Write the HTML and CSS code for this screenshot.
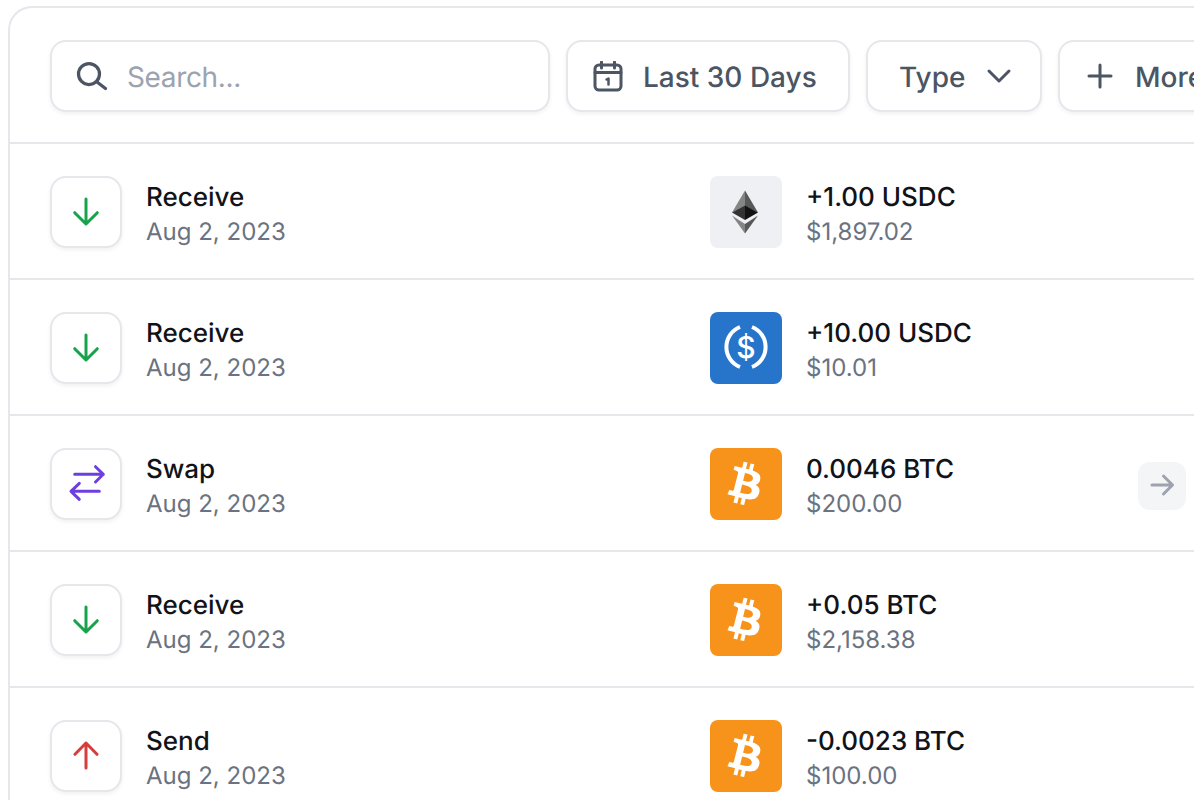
FILE: index.html
```html
<!DOCTYPE html>
<html lang="en">
<head>
  <meta charset="UTF-8">
  <title>Transactions</title>
  <link rel="stylesheet" href="styles.css">
</head>
<body>
  <div class="card">
    <div class="toolbar">
      <div class="search">
        <svg class="icon icon-search" viewBox="0 0 32 32"><circle cx="13" cy="13" r="10.500"/><path d="M21 21l8.500 6.500"/></svg>
        <span class="placeholder">Search...</span>
      </div>
      <button class="filter filter-date">
        <svg class="icon" viewBox="0 0 32 32"><rect x="3" y="4" width="26" height="25" rx="4"/><path d="M3 11.500h26M9.500 1v6M22.500 1v6"/><path class="thin" d="M14.500 18.500l2-1v6"/></svg>
        Last 30 Days
      </button>
      <button class="filter filter-type">
        Type
        <svg class="icon" viewBox="0 0 32 32"><path d="M6 10l10 10 10-10"/></svg>
      </button>
      <button class="filter filter-more">
        <svg class="icon" viewBox="0 0 32 32"><path d="M16 4v22M5 15h22"/></svg>
        More
      </button>
    </div>

    <div class="row">
      <div class="cell">
        <div class="kind kind-in"><svg viewBox="0 0 36 36"><path d="M18 5v25M6.700 18.700L18 30l11.300-11.300"/></svg></div>
        <div class="info"><div class="title">Receive</div><div class="sub">Aug 2, 2023</div></div>
      </div>
      <div class="cell">
        <div class="coin coin-eth">
          <svg viewBox="0 0 72 72">
            <path fill="#858585" d="M35 14.500V30L22 36.500z"/>
            <path fill="#585858" d="M35 14.500V30l13 6.500z"/>
            <path fill="#333" d="M22 36.500L35 29.500V44z"/>
            <path fill="#121212" d="M48 36.500L35 29.500V44z"/>
            <path fill="#858585" d="M22 39.500L35 48v9.500z"/>
            <path fill="#585858" d="M48 39.500L35 48v9.500z"/>
          </svg>
        </div>
        <div class="info"><div class="title">+1.00 USDC</div><div class="sub">$1,897.02</div></div>
      </div>
    </div>

    <div class="row">
      <div class="cell">
        <div class="kind kind-in"><svg viewBox="0 0 36 36"><path d="M18 5v25M6.700 18.700L18 30l11.300-11.300"/></svg></div>
        <div class="info"><div class="title">Receive</div><div class="sub">Aug 2, 2023</div></div>
      </div>
      <div class="cell">
        <div class="coin coin-usdc">
          <svg viewBox="0 0 72 72">
            <path class="ring" d="M30 15a21.500 21.500 0 0 0 0 40M42 15a21.500 21.500 0 0 1 0 40"/>
            <text class="dollar" x="36" y="45.500">$</text>
          </svg>
        </div>
        <div class="info"><div class="title">+10.00 USDC</div><div class="sub">$10.01</div></div>
      </div>
    </div>

    <div class="row">
      <div class="cell">
        <div class="kind kind-swap"><svg viewBox="0 0 36 36"><path d="M6.700 8.300h28.600M27.500.700l7.800 7.600-7.800 7.700M31.300 25.300H3M11.300 17.300L3 25.300l8.300 8"/></svg></div>
        <div class="info"><div class="title">Swap</div><div class="sub">Aug 2, 2023</div></div>
      </div>
      <div class="cell">
        <div class="coin coin-btc">
          <svg viewBox="-0.300 -0.600 25.200 25.200"><path d="M17.300 10.300c.24-1.590-.974-2.450-2.640-3.030l.54-2.153-1.315-.33-.525 2.107c-.345-.087-.705-.167-1.064-.25l.526-2.127-1.320-.33-.54 2.165c-.285-.067-.565-.132-.84-.2l-1.815-.45-.35 1.407s.975.225.955.236c.535.136.63.486.615.766l-1.477 5.920c-.075.166-.24.406-.614.314.015.02-.96-.24-.96-.24l-.66 1.510 1.710.426.93.242-.54 2.190 1.320.327.54-2.170c.36.1.705.19 1.050.273l-.51 2.154 1.320.33.545-2.190c2.240.427 3.930.257 4.640-1.774.57-1.637-.03-2.580-1.217-3.196.854-.193 1.500-.76 1.680-1.930h.01zm-3.010 4.220c-.404 1.640-3.157.75-4.050.53l.72-2.900c.896.23 3.757.67 3.330 2.370zm.41-4.240c-.37 1.490-2.662.735-3.405.55l.654-2.640c.744.18 3.137.524 2.750 2.084v.006z"/></svg>
        </div>
        <div class="info"><div class="title">0.0046 BTC</div><div class="sub">$200.00</div></div>
      </div>
      <div class="go"><svg viewBox="0 0 48 48"><path d="M14 23h20M25.500 14l9 9-9 9"/></svg></div>
    </div>

    <div class="row">
      <div class="cell">
        <div class="kind kind-in"><svg viewBox="0 0 36 36"><path d="M18 5v25M6.700 18.700L18 30l11.300-11.300"/></svg></div>
        <div class="info"><div class="title">Receive</div><div class="sub">Aug 2, 2023</div></div>
      </div>
      <div class="cell">
        <div class="coin coin-btc">
          <svg viewBox="-0.300 -0.600 25.200 25.200"><path d="M17.300 10.300c.24-1.590-.974-2.450-2.640-3.030l.54-2.153-1.315-.33-.525 2.107c-.345-.087-.705-.167-1.064-.25l.526-2.127-1.320-.33-.54 2.165c-.285-.067-.565-.132-.84-.2l-1.815-.45-.35 1.407s.975.225.955.236c.535.136.63.486.615.766l-1.477 5.920c-.075.166-.24.406-.614.314.015.02-.96-.24-.96-.24l-.66 1.510 1.710.426.93.242-.54 2.190 1.320.327.54-2.170c.36.1.705.19 1.050.273l-.51 2.154 1.320.33.545-2.190c2.240.427 3.930.257 4.640-1.774.57-1.637-.03-2.580-1.217-3.196.854-.193 1.500-.76 1.680-1.930h.01zm-3.010 4.220c-.404 1.640-3.157.75-4.050.53l.72-2.900c.896.23 3.757.67 3.330 2.370zm.41-4.240c-.37 1.490-2.662.735-3.405.55l.654-2.640c.744.18 3.137.524 2.750 2.084v.006z"/></svg>
        </div>
        <div class="info"><div class="title">+0.05 BTC</div><div class="sub">$2,158.38</div></div>
      </div>
    </div>

    <div class="row">
      <div class="cell">
        <div class="kind kind-out"><svg viewBox="0 0 36 36"><path d="M18 30V5M7 16.300L18 5l11 11.300"/></svg></div>
        <div class="info"><div class="title">Send</div><div class="sub">Aug 2, 2023</div></div>
      </div>
      <div class="cell">
        <div class="coin coin-btc">
          <svg viewBox="-0.300 -0.600 25.200 25.200"><path d="M17.300 10.300c.24-1.590-.974-2.450-2.640-3.030l.54-2.153-1.315-.33-.525 2.107c-.345-.087-.705-.167-1.064-.25l.526-2.127-1.320-.33-.54 2.165c-.285-.067-.565-.132-.84-.2l-1.815-.45-.35 1.407s.975.225.955.236c.535.136.63.486.615.766l-1.477 5.920c-.075.166-.24.406-.614.314.015.02-.96-.24-.96-.24l-.66 1.510 1.710.426.93.242-.54 2.190 1.320.327.54-2.170c.36.1.705.19 1.050.273l-.51 2.154 1.320.33.545-2.190c2.240.427 3.930.257 4.640-1.774.57-1.637-.03-2.580-1.217-3.196.854-.193 1.500-.76 1.680-1.930h.01zm-3.010 4.220c-.404 1.640-3.157.75-4.050.53l.72-2.900c.896.23 3.757.67 3.330 2.370zm.41-4.240c-.37 1.490-2.662.735-3.405.55l.654-2.640c.744.18 3.137.524 2.750 2.084v.006z"/></svg>
        </div>
        <div class="info"><div class="title">-0.0023 BTC</div><div class="sub">$100.00</div></div>
      </div>
    </div>
  </div>
</body>
</html>
```
FILE: styles.css
```css
html, body {
  margin: 0;
  height: 800px;
  overflow: hidden;
  background: #fff;
  font-family: Inter, "Liberation Sans", sans-serif;
  text-rendering: geometricPrecision;
}

.card {
  margin: 6px 0 0 8px;
  border: 2px solid #e5e7eb;
  border-right: none;
  border-bottom: none;
  border-top-left-radius: 24px;
}

/* toolbar */
.toolbar {
  display: flex;
  gap: 16px;
  padding: 32px 0 30px 40px;
  overflow: hidden;
}

.search,
.filter {
  display: flex;
  align-items: center;
  flex-shrink: 0;
  box-sizing: border-box;
  height: 72px;
  padding-top: 2px;
  background: #fff;
  border: 2px solid #e5e7eb;
  border-radius: 16px;
  box-shadow: 0 2px 4px rgba(16, 24, 40, 0.06);
  font-family: inherit;
  font-size: 28px;
  font-weight: 450;
  color: #4b5563;
  text-rendering: inherit;
}

.search {
  width: 500px;
  padding-left: 24px;
  gap: 19px;
}

.placeholder {
  font-weight: 400;
  letter-spacing: -0.35px;
  color: #9ca3af;
}

.filter {
  padding-right: 30px;
}

.filter-date {
  width: 284px;
  gap: 19px;
  padding-left: 24px;
}

.filter-type {
  width: 176px;
  gap: 18px;
  padding-left: 31px;
  padding-right: 24px;
}

.filter-more {
  gap: 19px;
  padding-left: 24px;
}

.icon {
  width: 32px;
  height: 32px;
  flex-shrink: 0;
  fill: none;
  stroke: #4b5563;
  stroke-width: 3;
  stroke-linecap: round;
  stroke-linejoin: round;
}

.icon-search {
  stroke-width: 3.250;
}

.icon .thin {
  stroke-width: 2.500;
}

/* rows */
.row {
  display: grid;
  grid-template-columns: 660px 1fr 48px;
  padding: 32px 8px 30px 40px;
  border-top: 2px solid #e5e7eb;
}

.cell {
  display: flex;
  align-items: center;
  gap: 24px;
}

.info {
  padding-top: 4px;
}

.title {
  font-size: 26px;
  font-weight: 450;
  line-height: 36px;
  color: #111318;
}

.sub {
  font-size: 24px;
  line-height: 32px;
  color: #6b7280;
}

.kind {
  display: flex;
  align-items: center;
  justify-content: center;
  box-sizing: border-box;
  width: 72px;
  height: 72px;
  background: #fff;
  border: 2px solid #e5e7eb;
  border-radius: 16px;
  box-shadow: 0 2px 4px rgba(16, 24, 40, 0.06);
}

.kind svg {
  width: 36px;
  height: 36px;
  overflow: visible;
  fill: none;
  stroke-width: 3;
  stroke-linecap: round;
  stroke-linejoin: round;
}

.kind-in svg { stroke: #16a34a; }
.kind-out svg { stroke: #d63d3d; }
.kind-swap svg { stroke: #6d3fe0; }

.coin {
  width: 72px;
  height: 72px;
  border-radius: 8px;
}

.coin svg {
  display: block;
  width: 72px;
  height: 72px;
}

.coin-eth { background: #eff0f3; }
.coin-usdc { background: #2775ca; }
.coin-btc { background: #f7931a; }
.coin-btc svg { fill: #fff; }

.ring {
  fill: none;
  stroke: #fff;
  stroke-width: 4;
}

.dollar {
  fill: #fff;
  font-size: 30px;
  font-weight: 500;
  text-anchor: middle;
}

.go {
  width: 48px;
  height: 48px;
  margin-top: 14px;
  background: #f4f5f7;
  border-radius: 12px;
}

.go svg {
  display: block;
  fill: none;
  stroke: #9ca3af;
  stroke-width: 3;
  stroke-linecap: round;
  stroke-linejoin: round;
}
```
